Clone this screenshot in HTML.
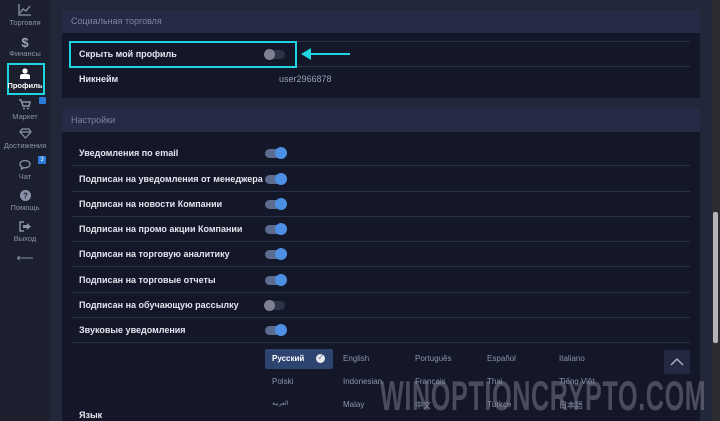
<!DOCTYPE html>
<html><head><meta charset="utf-8"><style>
*{margin:0;padding:0;box-sizing:border-box}
body{width:720px;height:421px;overflow:hidden;background:#22273a;font-family:"Liberation Sans","Noto Sans CJK SC",sans-serif;position:relative;color:#e6e8ef}
.a{position:absolute}
.side{left:0;top:0;width:50px;height:421px;background:#1b1f2e}
.si{position:absolute;left:0;width:50px;text-align:center;font-size:7.5px;color:#8d93a8}
.hdr{background:#252b45;color:#7d849c;font-size:9px;padding-left:9px;line-height:23px}
.body{background:#131728}
.row{position:absolute;left:72px;width:618px;height:25px;border-bottom:1px solid #2a3048}
.row span{position:absolute;left:7px;top:7px;font-size:9px;font-weight:bold;color:#e4e6ee}
.tg{position:absolute;left:193px;top:8px;width:20px;height:9px;border-radius:5px;background:#5b6c8e}
.tg:after{content:"";position:absolute;right:-2px;top:-2px;width:12px;height:12px;border-radius:50%;background:#4d8fe3}
.tg.off{background:#2e3448}
.tg.off:after{left:-1px;right:auto;background:#7d8190;width:11px;height:11px;top:-1px}
.lang{position:absolute;font-size:8px;color:#8d94ac}
</style></head><body>
<div class="a side">
<div class="si" style="top:4px"><svg width="14" height="12" viewBox="0 0 14 12"><path d="M1 0V11H13M2 9L5 5L8 7L12 2" stroke="#8d93a8" stroke-width="1.3" fill="none"/></svg><br>Торговля</div>
<div class="si" style="top:36px"><div style="font-size:13px;font-weight:bold;color:#a0a6ba;line-height:13px">$</div>Финансы</div>
<div class="a" style="left:7px;top:63px;width:38px;height:32px;border:2px solid #1ed4e0"></div>
<div class="si" style="top:68px;color:#fff;font-weight:bold"><svg width="10" height="11" viewBox="0 0 10 11"><circle cx="5" cy="3" r="2.6" fill="#fff"/><path d="M0 11V8Q0 6 3 6H7Q10 6 10 8V11Z" fill="#fff"/></svg><br>Профиль</div>
<div class="a" style="left:39px;top:97px;width:7px;height:7px;background:#2c7bd8;border-radius:1px"></div>
<div class="si" style="top:99px"><svg width="12" height="11" viewBox="0 0 12 11"><path d="M0 1H2L4 7H10L11 3H3" stroke="#8d93a8" stroke-width="1.5" fill="none"/><circle cx="5" cy="9.5" r="1" fill="#8d93a8"/><circle cx="9" cy="9.5" r="1" fill="#8d93a8"/></svg><br>Маркет</div>
<div class="si" style="top:128px"><svg width="13" height="11" viewBox="0 0 13 11"><path d="M3 1H10L12 4L6.5 10L1 4Z M1 4H12" stroke="#8d93a8" stroke-width="1.2" fill="none"/></svg><br>Достижения</div>
<div class="a" style="left:38px;top:156px;width:8px;height:8px;background:#2c7bd8;border-radius:1px;font-size:6px;color:#fff;text-align:center;line-height:8px">3</div>
<div class="si" style="top:159px"><svg width="13" height="11" viewBox="0 0 13 11"><path d="M6 1.5C3 1.5 1 3.3 1 5.2C1 6.5 1.8 7.4 3 8L2.5 10L5 8.6C5.3 8.7 5.7 8.8 6 8.8C9 8.8 11 7 11 5.2C11 3.3 9 1.5 6 1.5Z" stroke="#8d93a8" stroke-width="1.3" fill="none"/></svg><br>Чат</div>
<div class="si" style="top:190px"><svg width="11" height="11"><circle cx="5.5" cy="5.5" r="5.5" fill="#8d93a8"/><text x="5.5" y="8.5" font-size="8" font-weight="bold" fill="#1b1f2e" text-anchor="middle" font-family="Liberation Sans">?</text></svg><br>Помощь</div>
<div class="si" style="top:221px"><svg width="12" height="11" viewBox="0 0 12 11"><path d="M5 1H1V10H5" stroke="#8d93a8" stroke-width="1.4" fill="none"/><path d="M4 4H8V2L12 5.5L8 9V7H4Z" fill="#8d93a8"/></svg><br>Выход</div>
<div class="si" style="top:251px;font-size:12px;color:#8d93a8">⟵</div>
</div>

<div class="a hdr" style="left:62px;top:10px;width:638px;height:23px">Социальная торговля</div>
<div class="a body" style="left:62px;top:33px;width:638px;height:65px"></div>
<div class="row" style="top:41px;border-top:1px solid #2a3048;height:26px"><span>Скрыть мой профиль</span><div class="tg off" style="left:193px"></div></div>
<div class="row" style="top:67px;border-bottom:none"><span>Никнейм</span><span style="left:207px;font-weight:normal;color:#9aa0b6">user2966878</span></div>
<div class="a" style="left:69px;top:41px;width:228px;height:27px;border:2px solid #1ed4e0"></div>
<svg class="a" style="left:300px;top:47px" width="52" height="14"><path d="M50 7H8" stroke="#1ed4e0" stroke-width="2"/><path d="M1 7L11 1V13Z" fill="#1ed4e0"/></svg>

<div class="a hdr" style="left:62px;top:108px;width:638px;height:24px;line-height:25px">Настройки</div>
<div class="a body" style="left:62px;top:132px;width:638px;height:289px"></div>
<div class="row" style="top:141px"><span>Уведомления по email</span><div class="tg"></div></div>
<div class="row" style="top:167px"><span>Подписан на уведомления от менеджера</span><div class="tg"></div></div>
<div class="row" style="top:192px"><span>Подписан на новости Компании</span><div class="tg"></div></div>
<div class="row" style="top:217px"><span>Подписан на промо акции Компании</span><div class="tg"></div></div>
<div class="row" style="top:242px"><span>Подписан на торговую аналитику</span><div class="tg"></div></div>
<div class="row" style="top:268px"><span>Подписан на торговые отчеты</span><div class="tg"></div></div>
<div class="row" style="top:293px"><span>Подписан на обучающую рассылку</span><div class="tg off"></div></div>
<div class="row" style="top:318px"><span>Звуковые уведомления</span><div class="tg"></div></div>
<div class="a" style="left:79px;top:410px;font-size:9px;font-weight:bold">Язык</div>

<div class="a" style="left:265px;top:349px;width:68px;height:20px;background:#2e4470;border-radius:2px"></div>
<div class="a" style="left:272px;top:354px;font-size:8px;font-weight:bold;color:#fff">Русский</div>
<div class="a" style="left:316px;top:354px;width:9px;height:9px;border-radius:50%;background:#e8eaf0;font-size:6px;color:#2e4470;text-align:center;line-height:9px">✓</div>
<div class="lang" style="left:343px;top:354px">English</div>
<div class="lang" style="left:415px;top:354px">Português</div>
<div class="lang" style="left:487px;top:354px">Español</div>
<div class="lang" style="left:559px;top:354px">Italiano</div>
<div class="lang" style="left:272px;top:377px">Polski</div>
<div class="lang" style="left:343px;top:377px">Indonesian</div>
<div class="lang" style="left:415px;top:377px">Français</div>
<div class="lang" style="left:487px;top:377px">Thai</div>
<div class="lang" style="left:559px;top:377px">Tiếng Việt</div>
<div class="lang" style="left:272px;top:400px;font-size:6px">العربية</div>
<div class="lang" style="left:343px;top:400px">Malay</div>
<div class="lang" style="left:415px;top:400px">中文</div>
<div class="lang" style="left:487px;top:400px">Türkçe</div>
<div class="lang" style="left:559px;top:400px">日本語</div>
<div class="a" style="left:664px;top:350px;width:26px;height:24px;background:#222940;border-radius:2px"></div>
<svg class="a" style="left:669px;top:357px" width="16" height="10"><path d="M2 8L8 2L14 8" stroke="#a8aec2" stroke-width="1.5" fill="none"/></svg>
<div class="a" style="left:380px;top:372px;font-size:42px;font-weight:bold;color:rgba(130,130,140,0.5);transform:scaleX(0.6);transform-origin:0 0;white-space:nowrap;letter-spacing:1px">WINOPTIONCRYPTO.COM</div>

<div class="a" style="left:712px;top:0;width:8px;height:421px;background:#2b2d31"></div>
<div class="a" style="left:713px;top:212px;width:5px;height:131px;background:#b2b4b8;border-radius:2px"></div>
</body></html>
